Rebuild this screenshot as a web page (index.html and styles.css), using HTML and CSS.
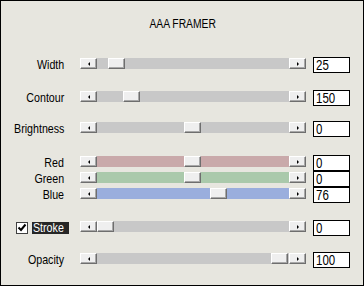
FILE: index.html
```html
<!DOCTYPE html>
<html>
<head>
<meta charset="utf-8">
<link rel="stylesheet" href="styles.css">
</head>
<body>
<div class="window">
  <div class="title"><span class="txt">AAA FRAMER</span></div>

  <div class="row r-width">
    <div class="label"><span class="txt">Width</span></div>
    <div class="slider"><span class="btn left"></span><span class="thumb" style="left:28px"></span><span class="btn right"></span></div>
    <div class="box"><span class="txt">25</span></div>
  </div>

  <div class="row r-contour">
    <div class="label"><span class="txt">Contour</span></div>
    <div class="slider"><span class="btn left"></span><span class="thumb" style="left:43px"></span><span class="btn right"></span></div>
    <div class="box"><span class="txt">150</span></div>
  </div>

  <div class="row r-bright">
    <div class="label"><span class="txt">Brightness</span></div>
    <div class="slider"><span class="btn left"></span><span class="thumb" style="left:104px"></span><span class="btn right"></span></div>
    <div class="box"><span class="txt">0</span></div>
  </div>

  <div class="row r-red">
    <div class="label"><span class="txt">Red</span></div>
    <div class="slider red"><span class="btn left"></span><span class="thumb" style="left:104px"></span><span class="btn right"></span></div>
    <div class="box"><span class="txt">0</span></div>
  </div>

  <div class="row r-tight">
    <div class="label"><span class="txt">Green</span></div>
    <div class="slider green"><span class="btn left"></span><span class="thumb" style="left:104px"></span><span class="btn right"></span></div>
    <div class="box"><span class="txt">0</span></div>
  </div>

  <div class="row r-tight">
    <div class="label"><span class="txt">Blue</span></div>
    <div class="slider blue"><span class="btn left"></span><span class="thumb" style="left:130px"></span><span class="btn right"></span></div>
    <div class="box"><span class="txt">76</span></div>
  </div>

  <div class="row r-stroke">
    <div class="label check-label">
      <span class="checkbox"><svg width="10" height="10" viewBox="0 0 10 10"><path d="M1.5 4.5 L4 7 L8.5 1.5" fill="none" stroke="#000" stroke-width="2"/></svg></span>
      <span class="focused"><span class="txt">Stroke</span></span>
    </div>
    <div class="slider"><span class="btn left"></span><span class="thumb" style="left:17px"></span><span class="btn right"></span></div>
    <div class="box"><span class="txt">0</span></div>
  </div>

  <div class="row r-opacity">
    <div class="label"><span class="txt">Opacity</span></div>
    <div class="slider"><span class="btn left"></span><span class="thumb" style="left:191px"></span><span class="btn right"></span></div>
    <div class="box"><span class="txt">100</span></div>
  </div>
</div>
</body>
</html>
```

FILE: styles.css
```css
html, body {
  margin: 0;
  padding: 0;
  background: #e7e6df;
}

.window {
  width: 364px;
  height: 286px;
  box-sizing: border-box;
  border: 1px solid #000;
  background: #e7e6df;
  font-family: "Liberation Sans", Arial, sans-serif;
  font-size: 13px;
  color: #000;
  display: flex;
  flex-direction: column;
}

.txt {
  display: inline-block;
  transform: scaleX(0.82);
}

.title {
  margin-top: 16px;
  height: 14px;
  line-height: 14px;
  font-size: 12px;
  text-align: center;
  padding-left: 2px;
}

.title .txt {
  transform: scaleX(0.86);
  transform-origin: center;
}

.row {
  display: flex;
  align-items: flex-start;
  height: 16px;
}

.r-width { margin-top: 26px; }
.r-contour { margin-top: 17px; }
.r-bright { margin-top: 15px; }
.r-red { margin-top: 18px; }
.r-tight { margin-top: 0; }
.r-stroke { margin-top: 17px; }
.r-opacity { margin-top: 16px; }

.label {
  width: 63px;
  flex: none;
  text-align: right;
  line-height: 16px;
  white-space: nowrap;
}

.label .txt {
  transform-origin: right center;
}

.check-label {
  display: flex;
  align-items: center;
  justify-content: flex-start;
  padding-left: 15px;
  box-sizing: border-box;
  height: 16px;
}

.checkbox {
  width: 12px;
  height: 12px;
  box-sizing: border-box;
  border: 1px solid #404040;
  background: #fff;
  display: flex;
  align-items: center;
  justify-content: center;
  flex: none;
}

.focused {
  margin-left: 4px;
  width: 37px;
  flex: none;
  height: 12px;
  line-height: 12px;
  background: #262626;
  color: #fff;
  text-align: left;
  padding-left: 1px;
  box-sizing: border-box;
}

.focused .txt {
  transform-origin: left center;
}

.slider {
  position: relative;
  margin-left: 16px;
  margin-top: 1px;
  width: 226px;
  height: 11px;
  flex: none;
  background: #c8c8c8;
  display: flex;
  justify-content: space-between;
}

.slider.red { background: #c9a9aa; }
.slider.green { background: #aac9ab; }
.slider.blue { background: #9aaedd; }

.btn, .thumb {
  width: 17px;
  height: 11px;
  box-sizing: border-box;
  background: #efefef;
  border-top: 1px solid #fff;
  border-left: 1px solid #fff;
  border-right: 1px solid #6e6e6e;
  border-bottom: 1px solid #6e6e6e;
  box-shadow: inset -1px -1px 0 #a8a8a8;
  display: flex;
  align-items: center;
  justify-content: center;
}

.thumb {
  position: absolute;
  top: 0;
}

.btn.left::before {
  content: "";
  width: 0;
  height: 0;
  border-top: 2px solid transparent;
  border-bottom: 2px solid transparent;
  border-right: 2px solid #000;
}

.btn.right::before {
  content: "";
  width: 0;
  height: 0;
  border-top: 2px solid transparent;
  border-bottom: 2px solid transparent;
  border-left: 2px solid #000;
}

.box {
  margin-left: 7px;
  width: 37px;
  height: 16px;
  flex: none;
  box-sizing: border-box;
  border: 1px solid #000;
  background: #fff;
  line-height: 14px;
  padding-left: 2px;
  font-size: 14px;
}

.box .txt {
  transform-origin: left center;
}
```
